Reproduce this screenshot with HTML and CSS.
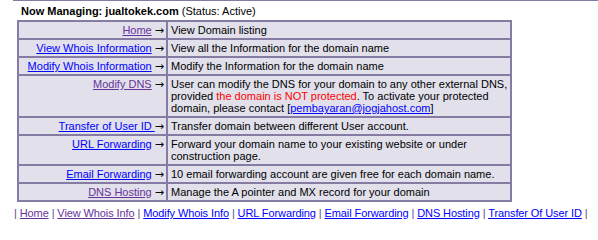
FILE: index.html
```html
<!DOCTYPE html>
<html>
<head>
<meta charset="utf-8">
<link rel="stylesheet" href="styles.css">
</head>
<body>
<div class="topline"></div>
<div class="heading"><b>Now Managing: jualtokek.com</b> (Status: Active)</div>
<div class="menu">
  <div class="cell key"><a class="visited" href="#">Home</a> <span class="arr">→</span></div>
  <div class="cell val">View Domain listing</div>
  <div class="cell key"><a href="#">View Whois Information</a> <span class="arr">→</span></div>
  <div class="cell val">View all the Information for the domain name</div>
  <div class="cell key"><a href="#">Modify Whois Information</a> <span class="arr">→</span></div>
  <div class="cell val">Modify the Information for the domain name</div>
  <div class="cell key"><a class="visited" href="#">Modify DNS</a> <span class="arr">→</span></div>
  <div class="cell val">User can modify the DNS for your domain to any other external DNS,<br>provided <span class="warn">the domain is NOT protected</span>. To activate your protected<br>domain, please contact [<a href="#">pembayaran@jogjahost.com</a>]</div>
  <div class="cell key"><a href="#">Transfer of User ID </a><span class="arr">→</span></div>
  <div class="cell val">Transfer domain between different User account.</div>
  <div class="cell key"><a href="#">URL Forwarding</a> <span class="arr">→</span></div>
  <div class="cell val">Forward your domain name to your existing website or under<br>construction page.</div>
  <div class="cell key"><a href="#">Email Forwarding</a> <span class="arr">→</span></div>
  <div class="cell val">10 email forwarding account are given free for each domain name.</div>
  <div class="cell key"><a class="visited" href="#">DNS Hosting</a> <span class="arr">→</span></div>
  <div class="cell val">Manage the A pointer and MX record for your domain</div>
</div>
<div class="footer">| <a class="visited" href="#">Home</a> | <a class="visited" href="#">View Whois Info</a> | <a href="#">Modify Whois Info</a> | <a href="#">URL Forwarding</a> | <a href="#">Email Forwarding</a> | <a href="#">DNS Hosting</a> | <a href="#">Transfer Of User ID</a> |</div>
</body>
</html>
```

FILE: styles.css
```css
body {
  margin: 0;
  background: #ffffff;
  color: #000000;
  font-family: "Liberation Sans", Arial, sans-serif;
  font-size: 11px;
}
a {
  color: #0000ff;
  text-decoration: underline;
}
a.visited {
  color: #663399;
}
.topline {
  margin-left: 13px;
  border-top: 1px solid #857ba3;
}
.heading {
  margin-top: 3px;
  padding-left: 21px;
  line-height: 14px;
  white-space: nowrap;
}
.menu {
  margin-top: 2px;
  margin-left: 17px;
  width: 491px;
  display: grid;
  grid-template-columns: 147px 342px;
  gap: 2px;
  border: 2px solid #857ba3;
  background: #857ba3;
}
.cell {
  background: #e1e0eb;
  line-height: 12px;
  padding: 2px 2px 2px 3px;
  white-space: nowrap;
}
.key {
  text-align: right;
  padding-right: 2px;
}
.arr {
  font-family: "DejaVu Sans", sans-serif;
  font-size: 11px;
  line-height: 0;
}
.warn {
  color: #ff0000;
}
.footer {
  margin-top: 4px;
  padding-left: 14px;
  line-height: 14px;
  color: #5a4a8a;
  white-space: nowrap;
  letter-spacing: -0.1px;
}
```
